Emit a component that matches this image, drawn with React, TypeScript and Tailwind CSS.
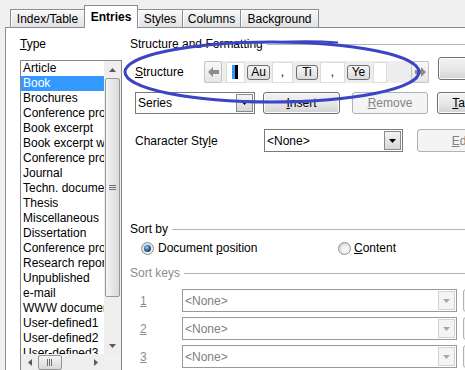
import React from "react";

const types = [
  "Article",
  "Book",
  "Brochures",
  "Conference proceedings",
  "Book excerpt",
  "Book excerpt with title",
  "Conference proceedings",
  "Journal",
  "Techn. documentation",
  "Thesis",
  "Miscellaneous",
  "Dissertation",
  "Conference proceedings",
  "Research report",
  "Unpublished",
  "e-mail",
  "WWW document",
  "User-defined1",
  "User-defined2",
  "User-defined3",
  "User-defined4",
];

const Tab = ({ label, w, first }: { label: string; w: string; first?: boolean }) => (
  <div
    className={`flex h-[18px] ${w} ${first ? "" : "-ml-px"} items-center justify-center border border-b-0 border-[#898c95] bg-linear-to-b from-[#f8f8f8] to-[#e2e2e2] shadow-[inset_1px_1px_0_#ffffff]`}
  >
    {label}
  </div>
);

const Btn = ({
  children,
  w,
  disabled,
  className = "",
}: {
  children?: React.ReactNode;
  w: string;
  disabled?: boolean;
  className?: string;
}) => (
  <div
    className={`flex h-full shrink-0 ${w} items-center justify-center whitespace-nowrap rounded-[3px] border ${
      disabled
        ? "border-[#adb2b5] bg-[#f4f4f4] text-[#838383]"
        : "border-[#707070] bg-linear-to-b from-[#f2f2f2] via-[#e8e8e8] to-[#d3d3d3] shadow-[inset_0_0_0_1px_#fbfbfb]"
    } ${className}`}
  >
    {children}
  </div>
);

const Caret = ({ color }: { color: string }) => (
  <svg width="7" height="4" viewBox="0 0 7 4">
    <path d="M0 0 L7 0 L3.5 4 Z" fill={color} />
  </svg>
);

const Combo = ({ text, w, disabled }: { text: string; w: string; disabled?: boolean }) => (
  <div
    className={`flex h-full shrink-0 ${w} items-stretch border bg-white ${
      disabled ? "border-[#9a9a9a] text-[#808080]" : "border-[#7a7a7a]"
    }`}
  >
    <span className="flex flex-1 items-center overflow-hidden whitespace-nowrap pl-[2px]">{text}</span>
    <div
      className={`m-px flex w-[17px] items-center justify-center border ${
        disabled
          ? "border-[#d2d2d2] bg-[#f4f4f4]"
          : "border-[#8a8a8a] bg-linear-to-b from-[#f4f4f4] to-[#d6d6d6]"
      }`}
    >
      <Caret color={disabled ? "#a8a8a8" : "#000000"} />
    </div>
  </div>
);

const Radio = ({ checked }: { checked?: boolean }) => (
  <div className="flex h-[13px] w-[13px] shrink-0 items-center justify-center rounded-full border border-[#8e8f8f] bg-linear-to-br from-[#cfcfcf] to-[#fafafa]">
    {checked ? (
      <div className="h-[7px] w-[7px] rounded-full bg-[radial-gradient(circle_at_40%_35%,#a9cdf0,#2f66a0_45%,#0c2a4e)]" />
    ) : (
      <div className="h-[7px] w-[7px] rounded-full bg-linear-to-br from-[#e6e6e6] to-[#ffffff]" />
    )}
  </div>
);

const Heading = ({ text, gray, className = "" }: { text: string; gray?: boolean; className?: string }) => (
  <div className={`flex h-[16px] shrink-0 items-center pl-[8px] ${gray ? "text-[#8d8d8d]" : ""} ${className}`}>
    <span className="whitespace-nowrap">{text}</span>
    <div className="ml-[4px] h-px flex-1 bg-[#b4b4b4]" />
  </div>
);

const Token = ({ label, w }: { label: string; w: string }) => (
  <div
    className={`flex h-[15px] ${w} items-center justify-center rounded-[3px] border border-[#707070] bg-linear-to-b from-[#f6f6f6] to-[#dcdcdc] leading-none`}
  >
    {label}
  </div>
);

const TextBox = ({ w, children }: { w: string; children?: React.ReactNode }) => (
  <div className={`flex h-[21px] ${w} items-center justify-center border border-[#dcdcdc] bg-white`}>{children}</div>
);

const Arrow = ({ dir }: { dir: "left" | "right" }) => (
  <div className="flex h-full w-[18px] items-center justify-center rounded-[2px] border border-[#c4c4c4] bg-linear-to-b from-[#f8f8f8] to-[#e6e6e6]">
    <svg width="11" height="10" viewBox="0 0 11 10">
      {dir === "left" ? (
        <path d="M0 5 L5 0 L5 3 L11 3 L11 7 L5 7 L5 10 Z" fill="#8c8c8c" />
      ) : (
        <path d="M11 5 L6 0 L6 3 L0 3 L0 7 L6 7 L6 10 Z" fill="#8c8c8c" />
      )}
    </svg>
  </div>
);

const KeyRow = ({ n, className = "" }: { n: string; className?: string }) => (
  <div className={`flex h-[23px] shrink-0 items-center pl-[18px] ${className}`}>
    <span className="w-[42px] shrink-0 text-[#8d8d8d] underline">{n}</span>
    <Combo text="<None>" w="w-[275px]" disabled />
    <div className="ml-[6px] h-full w-[40px] shrink-0 rounded-[3px] border border-[#adb2b5] bg-[#f4f4f4]" />
  </div>
);

export default function App() {
  return (
    <div className="relative flex h-[370px] w-[465px] flex-col overflow-hidden bg-[#f0f0f0] font-['Liberation_Sans',Arial,sans-serif] text-[12px] leading-[14px] text-black">
      {/* tab strip */}
      <div className="flex h-[27px] shrink-0 items-end pl-[10px]">
        <Tab label="Index/Table" w="w-[75px]" first />
        <div className="relative z-10 -mb-px -ml-px flex h-[23px] w-[54px] items-center justify-center border border-b-0 border-[#898c95] bg-white font-bold">
          Entries
        </div>
        <Tab label="Styles" w="w-[46px]" />
        <Tab label="Columns" w="w-[59px]" />
        <Tab label="Background" w="w-[79px]" />
      </div>

      {/* panel */}
      <div className="ml-[5px] flex min-h-0 flex-1 border-l border-t border-[#898c95] bg-white">
        {/* type list */}
        <div className="flex w-[116px] shrink-0 flex-col pl-[14px] pt-[8px]">
          <div className="h-[16px] shrink-0 leading-[16px]">
            <u>T</u>ype
          </div>
          <div className="mt-[8px] flex h-[312px] w-[102px] shrink-0 flex-col border border-[#828790]">
            <div className="flex h-[293px]">
              <div className="w-[83px] overflow-hidden">
                {types.map((t, i) => (
                  <div
                    key={i}
                    className={`h-[15px] whitespace-nowrap pl-[2px] leading-[15px] ${
                      i === 1 ? "bg-[#3399ff] text-white" : ""
                    }`}
                  >
                    {t}
                  </div>
                ))}
              </div>
              <div className="flex w-[17px] flex-col bg-[#eeeeee]">
                <div className="flex h-[17px] items-center justify-center">
                  <svg width="7" height="4" viewBox="0 0 7 4">
                    <path d="M0 4 L3.5 0 L7 4 Z" fill="#5a5a5a" />
                  </svg>
                </div>
                <div className="mx-px flex h-[219px] items-center justify-center rounded-[2px] border border-[#979797] bg-linear-to-r from-[#f4f4f4] to-[#d9d9d9]">
                  <svg width="7" height="6" viewBox="0 0 7 6">
                    <path d="M0 0.5 H7 M0 2.5 H7 M0 4.5 H7" stroke="#707070" strokeWidth="1" />
                  </svg>
                </div>
                <div className="flex-1" />
                <div className="flex h-[17px] items-center justify-center">
                  <Caret color="#5a5a5a" />
                </div>
              </div>
            </div>
            <div className="flex h-[17px]">
              <div className="flex w-[83px] bg-[#eeeeee]">
                <div className="flex w-[17px] items-center justify-center">
                  <svg width="4" height="7" viewBox="0 0 4 7">
                    <path d="M4 0 L0 3.5 L4 7 Z" fill="#5a5a5a" />
                  </svg>
                </div>
                <div className="my-px flex w-[24px] items-center justify-center rounded-[2px] border border-[#979797] bg-linear-to-b from-[#f4f4f4] to-[#d9d9d9]">
                  <svg width="6" height="7" viewBox="0 0 6 7">
                    <path d="M0.5 0 V7 M2.5 0 V7 M4.5 0 V7" stroke="#707070" strokeWidth="1" />
                  </svg>
                </div>
                <div className="flex-1" />
                <div className="flex w-[17px] items-center justify-center">
                  <svg width="4" height="7" viewBox="0 0 4 7">
                    <path d="M0 0 L4 3.5 L0 7 Z" fill="#5a5a5a" />
                  </svg>
                </div>
              </div>
              <div className="w-[17px] bg-[#f0f0f0]" />
            </div>
          </div>
        </div>

        {/* right side */}
        <div className="flex w-[420px] shrink-0 flex-col">
          <Heading text="Structure and Formatting" className="mt-[8px]" />

          <div className="mt-[5px] flex h-[27px] shrink-0 items-start pl-[13px]">
            <div className="mt-[4px] flex h-[22px] w-[69px] shrink-0 items-center">
              <span>
                <u>S</u>tructure
              </span>
            </div>
            <div className="mt-[4px] flex h-[22px] w-[225px] shrink-0 items-center bg-[#ededed]">
              <Arrow dir="left" />
              <div className="ml-[4px]">
                <TextBox w="w-[19px]">
                  <div className="ml-[-2px] flex h-[14px]">
                    <div className="w-[3px] bg-[#3399ff]" />
                    <div className="w-[3px] bg-black" />
                  </div>
                </TextBox>
              </div>
              <div className="ml-[2px]">
                <Token label="Au" w="w-[23px]" />
              </div>
              <div className="ml-[2px]">
                <TextBox w="w-[21px]">,</TextBox>
              </div>
              <div className="ml-[3px]">
                <Token label="Ti" w="w-[22px]" />
              </div>
              <div className="ml-[2px]">
                <TextBox w="w-[25px]">,</TextBox>
              </div>
              <div className="ml-[2px]">
                <Token label="Ye" w="w-[23px]" />
              </div>
              <div className="ml-[3px]">
                <TextBox w="w-[14px]" />
              </div>
              <div className="ml-auto h-full w-[18px]">
                <Arrow dir="right" />
              </div>
            </div>
            <div className="ml-[9px] h-[23px]">
              <Btn w="w-[100px]">All</Btn>
            </div>
          </div>

          <div className="mt-[8px] flex h-[22px] shrink-0 pl-[13px]">
            <Combo text="Series" w="w-[120px]" />
            <Btn w="w-[77px]" className="ml-[8px]">
              <span>
                <u>I</u>nsert
              </span>
            </Btn>
            <Btn w="w-[76px]" className="ml-[12px]" disabled>
              <span>
                <u>R</u>emove
              </span>
            </Btn>
            <Btn w="w-[76px]" className="ml-[9px]">
              <span>
                <u>T</u>ab stop
              </span>
            </Btn>
          </div>

          <div className="mt-[15px] flex h-[23px] shrink-0 items-center pl-[13px]">
            <span className="w-[129px] shrink-0">
              Character Sty<u>l</u>e
            </span>
            <Combo text="<None>" w="w-[139px]" />
            <Btn w="w-[100px]" className="ml-[14px]" disabled>
              <span>
                <u>E</u>dit...
              </span>
            </Btn>
          </div>

          <Heading text="Sort by" className="mt-[69px]" />

          <div className="mt-[3px] flex h-[16px] shrink-0 items-center pl-[19px]">
            <div className="flex w-[197px] shrink-0 items-center">
              <Radio checked />
              <span className="ml-[4px]">
                Document <u>p</u>osition
              </span>
            </div>
            <Radio />
            <span className="ml-[3px]">
              <u>C</u>ontent
            </span>
          </div>

          <Heading text="Sort keys" gray className="mt-[9px]" />

          <KeyRow n="1" className="mt-[8px]" />
          <KeyRow n="2" className="mt-[5px]" />
          <KeyRow n="3" className="mt-[5px]" />
        </div>
      </div>

      <svg className="pointer-events-none absolute left-0 top-0" width="465" height="370" viewBox="0 0 465 370">
        <ellipse cx="272" cy="72" rx="147" ry="30" fill="none" stroke="#3d43c5" strokeWidth="3" />
        <path d="M282 42 Q310 40.5 338 42.5" fill="none" stroke="#3d43c5" strokeWidth="2" />
      </svg>
    </div>
  );
}
